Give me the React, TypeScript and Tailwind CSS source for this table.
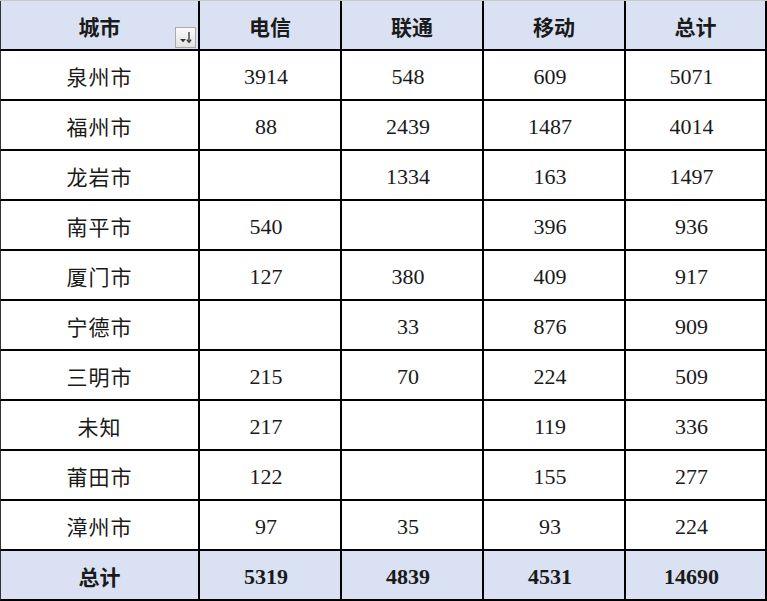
import React from 'react';

type Row = { city: string; dx: string; lt: string; yd: string; total: string };

const rows: Row[] = [
  { city: '泉州市', dx: '3914', lt: '548', yd: '609', total: '5071' },
  { city: '福州市', dx: '88', lt: '2439', yd: '1487', total: '4014' },
  { city: '龙岩市', dx: '', lt: '1334', yd: '163', total: '1497' },
  { city: '南平市', dx: '540', lt: '', yd: '396', total: '936' },
  { city: '厦门市', dx: '127', lt: '380', yd: '409', total: '917' },
  { city: '宁德市', dx: '', lt: '33', yd: '876', total: '909' },
  { city: '三明市', dx: '215', lt: '70', yd: '224', total: '509' },
  { city: '未知', dx: '217', lt: '', yd: '119', total: '336' },
  { city: '莆田市', dx: '122', lt: '', yd: '155', total: '277' },
  { city: '漳州市', dx: '97', lt: '35', yd: '93', total: '224' },
];

const cjk = "font-['Noto_Sans_CJK_SC',sans-serif] pt-[2px]";
const num = "font-['Liberation_Serif','Noto_Sans_CJK_SC',serif] text-[22px] pr-[8px] pt-[3px]";
const cell = 'border-r-2 border-b-2 border-black h-[50px] flex items-center justify-center text-[21px] leading-none text-[#1a1a1a]';

function FilterButton() {
  return (
    <div className="absolute right-[2px] bottom-[1px] w-[21px] h-[21px] border border-[#a9a9a9] bg-gradient-to-b from-[#fbfbfb] to-[#e2e2e2] flex items-center justify-center">
      <svg width="17" height="17" viewBox="0 0 17 17">
        <path d="M3 10h6l-3 3.2z" fill="#333" />
        <path d="M12 3v10" stroke="#333" strokeWidth="1.3" />
        <path d="M9.8 10.6l2.2 2.8 2.2-2.8" stroke="#333" strokeWidth="1.3" fill="none" />
      </svg>
    </div>
  );
}

function Line({ cells, bold, shaded, header }: { cells: string[]; bold?: boolean; shaded?: boolean; header?: boolean }) {
  return (
    <>
      {cells.map((c, i) => (
        <div
          key={i}
          className={`${cell} ${i === 0 ? 'border-l border-l-[#333] relative' : ''} ${shaded ? 'bg-[#d9e1f2]' : 'bg-white'} ${
            i === 0 || header ? `${cjk} ${bold ? 'font-bold' : 'tracking-[1px]'}` : `${num} ${bold ? 'font-bold' : ''}`
          }`}
        >
          {c}
          {header && i === 0 && <FilterButton />}
        </div>
      ))}
    </>
  );
}

export default function App() {
  return (
    <div className="w-[767px] h-[601px] bg-white overflow-hidden">
      <div className="grid grid-cols-[200px_142px_142px_142px_141px] border-t border-t-[#c8c8c8]">
        <Line cells={['城市', '电信', '联通', '移动', '总计']} bold shaded header />
        {rows.map((r) => (
          <Line key={r.city} cells={[r.city, r.dx, r.lt, r.yd, r.total]} />
        ))}
        <Line cells={['总计', '5319', '4839', '4531', '14690']} bold shaded />
      </div>
    </div>
  );
}
